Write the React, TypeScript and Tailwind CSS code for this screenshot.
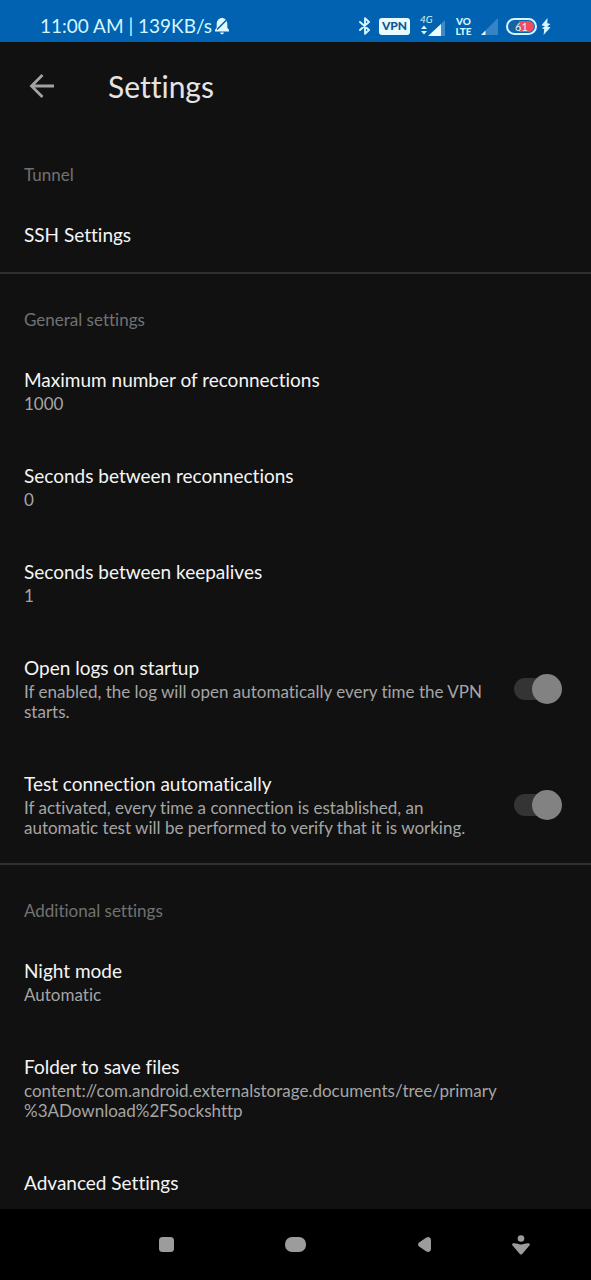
import React from "react";

type Row = { id: string; title: string; summary?: string; toggle?: boolean };
type Section = { title: string; rows: Row[] };

const sections: Section[] = [
  { title: "Tunnel", rows: [{ id: "ssh", title: "SSH Settings" }] },
  {
    title: "General settings",
    rows: [
      { id: "max", title: "Maximum number of reconnections", summary: "1000" },
      { id: "between", title: "Seconds between reconnections", summary: "0" },
      { id: "keepalive", title: "Seconds between keepalives", summary: "1" },
      {
        id: "logs",
        title: "Open logs on startup",
        summary: "If enabled, the log will open automatically every time the VPN\nstarts.",
        toggle: true,
      },
      {
        id: "test",
        title: "Test connection automatically",
        summary:
          "If activated, every time a connection is established, an\nautomatic test will be performed to verify that it is working.",
        toggle: true,
      },
    ],
  },
  {
    title: "Additional settings",
    rows: [
      { id: "night", title: "Night mode", summary: "Automatic" },
      {
        id: "folder",
        title: "Folder to save files",
        summary:
          "content://com.android.externalstorage.documents/tree/primary\n%3ADownload%2FSockshttp",
      },
      { id: "advanced", title: "Advanced Settings" },
    ],
  },
];

function StatusBar() {
  return (
    <div className="flex h-[42px] shrink-0 items-end justify-between bg-[#0062b1] pr-10 pb-1 pl-10 text-[#d5f6ff]">
      <div className="flex h-6 items-center gap-0.5 text-[19px] leading-6">
        <span className="whitespace-nowrap">11:00 AM | 139KB/s</span>
        <svg className="h-[18px] w-4" viewBox="0 0 16 18" aria-hidden="true">
          <path
            d="M8 .8C4.700 1.300 2.700 3.600 2.700 6.800v3.700L1 13v1.400h14V13l-1.700-2.500V6.800C13.300 3.600 11.300 1.300 8 .8Z"
            fill="#e2f8ff"
          />
          <path d="M6 15.400h4c-.3 1.200-1 1.800-2 1.800s-1.700-.6-2-1.800Z" fill="#e2f8ff" />
          <path d="m3 12.500 9.500-9.500" stroke="#0062b1" strokeWidth="1.600" />
        </svg>
      </div>
      <div className="flex h-6 items-center">
        <svg className="h-[18px] w-3" viewBox="0 0 12 18" fill="none" stroke="currentColor" strokeWidth="1.900" aria-hidden="true">
          <path d="m1 5 9 8-4 3.800V1.200L10 5l-9 8" strokeLinejoin="round" strokeLinecap="round" />
        </svg>
        <span className="ml-2 flex h-[17px] w-[31px] items-center justify-center rounded-[3px] bg-[#e6faff] text-xs leading-4 font-black text-[#14558f]">
          VPN
        </span>
        <div className="ml-2.5 flex h-[22px] w-[26px] flex-col">
          <span className="h-[9px] text-[10px] leading-[9px] italic">4G</span>
          <svg className="-mt-1 h-4 w-[26px] shrink-0" viewBox="0 0 26 16" aria-hidden="true">
            <path d="M1 9 4 5.500 7 9ZM1 11l3 3.500L7 11Z" fill="#e2f8ff" />
            <path d="M25 0v16h-4V4Z" fill="#3f8bc9" />
            <path d="M21 4v12H8Z" fill="#e9fbff" />
          </svg>
        </div>
        <span className="ml-2 flex w-[19px] flex-col items-center text-[10px] leading-[10px] font-black">
          <span>VO</span>
          <span>LTE</span>
        </span>
        <svg className="ml-2 h-[17px] w-[17px]" viewBox="0 0 17 17" aria-hidden="true">
          <path d="M17 0v17H0Z" fill="#3683c5" />
          <path d="M4.500 12.500V17H0Z" fill="#e9fbff" />
        </svg>
        <span className="ml-2 flex h-[17px] w-[31px] items-center rounded-full border-2 border-[#d5f6ff] p-px">
          <span className="flex h-full w-full items-center justify-center rounded-full bg-linear-to-r from-[#1d60a0] from-40% to-[#f04d5c] to-40% text-[11px] leading-[11px]">
            61
          </span>
        </span>
        <svg className="ml-1 h-[17px] w-[10px]" viewBox="0 0 10 17" fill="currentColor" aria-hidden="true">
          <path d="M6.500 0 .5 7.200 4 8.200.8 10.300l2.400.6L2.600 17l6.900-7.800-3.300-.8 3.300-2.500-3.200-.7Z" />
        </svg>
      </div>
    </div>
  );
}

function SettingRow({ row }: { row: Row }) {
  const text = (
    <span className="flex min-w-0 flex-1 flex-col gap-0.5">
      <span className="text-[19px] leading-6 text-[#f5f5f5]">{row.title}</span>
      {row.summary && (
        <span className="text-[17px] leading-5 whitespace-pre-line text-[#a5a5a5]">{row.summary}</span>
      )}
    </span>
  );
  if (row.toggle) {
    return (
      <label htmlFor={row.id} className="flex w-full items-center gap-4 py-[25px] pr-[29px] pl-6">
        {text}
        <input
          id={row.id}
          type="checkbox"
          role="switch"
          defaultChecked
          className="relative h-[30px] w-12 shrink-0 appearance-none before:absolute before:top-1 before:left-0 before:h-[22px] before:w-10 before:rounded-full before:bg-[#343434] after:absolute after:top-0 after:left-0 after:size-[30px] after:rounded-full after:bg-[#828282] checked:after:left-[18px]"
        />
      </label>
    );
  }
  return (
    <button type="button" className="flex w-full py-[25px] pr-6 pl-6 text-left">
      {text}
    </button>
  );
}

export default function App() {
  return (
    <div className="flex h-screen flex-col overflow-hidden bg-[#111111] font-['Lato','Noto_Sans',sans-serif] [font-variant-ligatures:none]">
      <StatusBar />
      <header className="flex h-[87px] shrink-0 items-center pl-[29px]">
        <button type="button" aria-label="Back" className="flex w-[79px] text-[#a2a2a2]">
          <svg className="size-[26px]" viewBox="0 0 26 26" fill="none" stroke="currentColor" strokeWidth="2.800" aria-hidden="true">
            <path d="M25 13H3M13.500 2 2.500 13l11 11" />
          </svg>
        </button>
        <h1 className="text-[30px] leading-9 text-[#e4e4e4]">Settings</h1>
      </header>
      <main className="min-h-0 flex-1 overflow-y-auto [scrollbar-width:none]">
        {sections.map((section) => (
          <section key={section.title} className="border-[#2f2f2f] not-first:border-t-2">
            <h2 className="px-6 pt-9 pb-[13px] text-[17px] leading-5 text-[#717171]">{section.title}</h2>
            {section.rows.map((row) => (
              <SettingRow key={row.id} row={row} />
            ))}
          </section>
        ))}
      </main>
      <nav className="grid h-[71px] shrink-0 grid-cols-[102fr_129fr_129fr_129fr_64fr_38fr] items-center bg-black text-[#9c9c9c]">
        <button type="button" aria-label="Recent apps" className="col-start-2 flex justify-center">
          <svg className="h-[15px] w-[15px]" viewBox="0 0 15 15" aria-hidden="true">
            <rect width="15" height="15" rx="3.500" fill="currentColor" />
          </svg>
        </button>
        <button type="button" aria-label="Home" className="flex justify-center">
          <svg className="h-[15px] w-[21px]" viewBox="0 0 21 15" aria-hidden="true">
            <rect width="21" height="15" rx="7" fill="currentColor" />
          </svg>
        </button>
        <button type="button" aria-label="Go back" className="flex justify-center">
          <svg className="h-[15px] w-[13px]" viewBox="0 0 13 15" aria-hidden="true">
            <path d="M8 .7 1.400 5.300C-.4 6.600-.4 8.400 1.400 9.700L8 14.300c2.700 1.500 5 .2 5-2.800v-8C13 .5 10.700-.8 8 .7Z" fill="currentColor" />
          </svg>
        </button>
        <button type="button" aria-label="Hide navigation bar" className="flex justify-center">
          <svg className="h-5 w-[18px]" viewBox="0 0 18 20" fill="currentColor" aria-hidden="true">
            <circle cx="9" cy="3.500" r="3.300" />
            <path d="M1.400 8.300C4 8 6.300 9.400 9 9.400s5-1.400 7.600-1.100c1.300.2 1.700 1.200.8 2.200l-7.200 8.400c-.7.8-1.700.8-2.400 0L.6 10.500C-.3 9.500.1 8.500 1.400 8.300Z" />
          </svg>
        </button>
      </nav>
    </div>
  );
}
